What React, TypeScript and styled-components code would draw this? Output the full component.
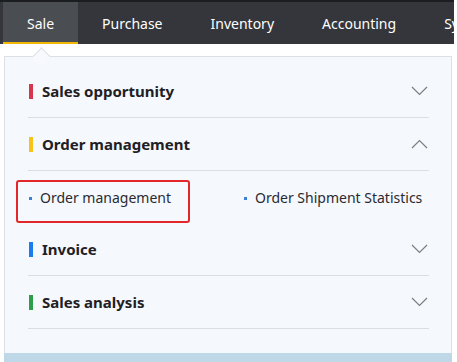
import React from 'react';
import styled, { createGlobalStyle } from 'styled-components';

const GlobalStyle = createGlobalStyle`
  html, body {
    margin: 0;
    padding: 0;
    background: #ffffff;
  }
  body {
    font-family: "Noto Sans", "Open Sans", Arial, sans-serif;
    width: 457px;
    height: 362px;
    overflow: hidden;
  }
`;

const Page = styled.div`
  width: 457px;
  height: 362px;
  display: flex;
  flex-direction: column;
`;

const NavBar = styled.nav`
  height: 44px;
  width: 454px;
  border-top: 2px solid #1c1d20;
  background: #34363b;
  display: flex;
  padding-left: 3px;
  box-sizing: border-box;
  overflow: hidden;
`;

const NavItem = styled.div<{ $active?: boolean }>`
  height: 42px;
  padding: 2px 24px 0;
  display: flex;
  align-items: center;
  flex-shrink: 0;
  color: #ffffff;
  font-size: 14px;
  white-space: nowrap;
  box-sizing: border-box;
  background: ${(p) => (p.$active ? '#4a4d52' : 'transparent')};
  border-bottom: 2px solid ${(p) => (p.$active ? '#f2b705' : 'transparent')};
`;

const Dropdown = styled.div`
  position: relative;
  margin: 12px 0 0 4px;
  width: 448px;
  height: 306px;
  background: #f5f8fd;
  border: 1px solid #dce0e6;
  border-bottom: none;
  box-sizing: border-box;
  display: flex;
  flex-direction: column;
  padding: 8px 22px 0 23px;
`;

const Caret = styled.div`
  position: absolute;
  top: -7px;
  left: 30px;
  width: 12px;
  height: 12px;
  background: #f7f9fc;
  border-left: 1px solid #dce0e6;
  border-top: 1px solid #dce0e6;
  transform: rotate(45deg);
`;

const FooterBand = styled.div`
  position: absolute;
  left: -1px;
  right: -1px;
  bottom: 0;
  height: 9px;
  background: #bed8e8;
`;

const GroupHeader = styled.div`
  height: 52px;
  display: flex;
  align-items: center;
  border-bottom: 1px solid #dadde3;
  padding-left: 1px;
`;

const ColorBar = styled.span<{ $color: string }>`
  width: 4px;
  height: 15px;
  background: ${(p) => p.$color};
  margin-right: 9px;
`;

const GroupTitle = styled.span`
  flex: 1;
  font-size: 15px;
  font-weight: 700;
  color: #1f2024;
`;

const ChevronBox = styled.span`
  width: 18px;
  display: flex;
  justify-content: center;
  margin-right: 1px;
`;

const SubList = styled.div`
  height: 52px;
  display: flex;
  align-items: center;
  position: relative;
`;

const SubItem = styled.div<{ $width: number }>`
  width: ${(p) => p.$width}px;
  flex-shrink: 0;
  display: flex;
  align-items: center;
  font-size: 14px;
  color: #2a2b30;
  white-space: nowrap;
`;

const Bullet = styled.span`
  width: 3px;
  height: 3px;
  flex-shrink: 0;
  background: #3d7fd6;
  margin: 2px 8px 0 1px;
`;

const Highlight = styled.div`
  position: absolute;
  left: -12px;
  top: 9px;
  width: 174px;
  height: 43px;
  border: 2px solid #e3262a;
  border-radius: 3px;
  box-sizing: border-box;
`;

const Chevron = ({ up }: { up?: boolean }) => (
  <svg width="17" height="10" viewBox="0 0 17 10">
    <path
      d={up ? 'M1 9 L8.5 1.5 L16 9' : 'M1 1 L8.5 8.5 L16 1'}
      fill="none"
      stroke="#7a7d84"
      strokeWidth="1.2"
    />
  </svg>
);

const groups = [
  { title: 'Sales opportunity', color: '#d8344d', open: false },
  { title: 'Order management', color: '#f7c318', open: true },
  { title: 'Invoice', color: '#1b7bf0', open: false },
  { title: 'Sales analysis', color: '#2e9e4a', open: false },
];

const navItems = ['Sale', 'Purchase', 'Inventory', 'Accounting', 'System'];

export default function App() {
  return (
    <Page>
      <GlobalStyle />
      <NavBar>
        {navItems.map((item, i) => (
          <NavItem key={item} $active={i === 0}>
            {item}
          </NavItem>
        ))}
      </NavBar>
      <Dropdown>
        <Caret />
        {groups.map((g) => (
          <React.Fragment key={g.title}>
            <GroupHeader>
              <ColorBar $color={g.color} />
              <GroupTitle>{g.title}</GroupTitle>
              <ChevronBox>
                <Chevron up={g.open} />
              </ChevronBox>
            </GroupHeader>
            {g.open && (
              <SubList>
                <Highlight />
                <SubItem $width={215}>
                  <Bullet />
                  Order management
                </SubItem>
                <SubItem $width={190}>
                  <Bullet />
                  Order Shipment Statistics
                </SubItem>
              </SubList>
            )}
          </React.Fragment>
        ))}
        <FooterBand />
      </Dropdown>
    </Page>
  );
}
